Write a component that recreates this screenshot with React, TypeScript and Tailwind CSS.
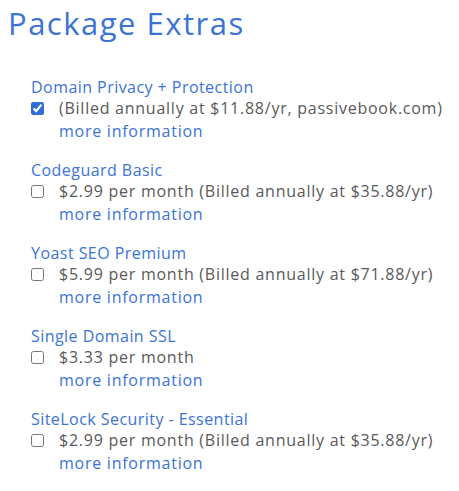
import React from 'react';

interface Extra {
  name: string;
  price: string;
  checked?: boolean;
}

const extras: Extra[] = [
  { name: 'Domain Privacy + Protection', price: '(Billed annually at $11.88/yr, passivebook.com)', checked: true },
  { name: 'Codeguard Basic', price: '$2.99 per month (Billed annually at $35.88/yr)' },
  { name: 'Yoast SEO Premium', price: '$5.99 per month (Billed annually at $71.88/yr)' },
  { name: 'Single Domain SSL', price: '$3.33 per month' },
  { name: 'SiteLock Security - Essential', price: '$2.99 per month (Billed annually at $35.88/yr)' },
];

const App: React.FC = () => {
  return (
    <div className="min-h-[491px] w-[459px] bg-white font-['Open_Sans',sans-serif]">
      <h1 className="pl-[8px] pt-[4px] text-[31px] leading-[38px] tracking-[1.5px] text-[#3b73d6]">Package Extras</h1>
      <div className="pl-[31px] pt-[36px] flex flex-col gap-[18px]">
        {extras.map((extra) => (
          <div key={extra.name}>
            <div className="text-[16px] leading-[19px] tracking-[0.45px] text-[#3b73d6]">{extra.name}</div>
            <div className="flex items-start">
              <input
                type="checkbox"
                defaultChecked={extra.checked}
                className="m-0 mt-[5px] h-[13px] w-[13px] shrink-0 accent-[#2f6fd6]"
              />
              <div className="pl-[15px] text-[16px] leading-[23px] tracking-[0.75px]">
                <div className="text-[#595959]">{extra.price}</div>
                <div className="text-[#3b73d6]">more information</div>
              </div>
            </div>
          </div>
        ))}
      </div>
    </div>
  );
};

export default App;
